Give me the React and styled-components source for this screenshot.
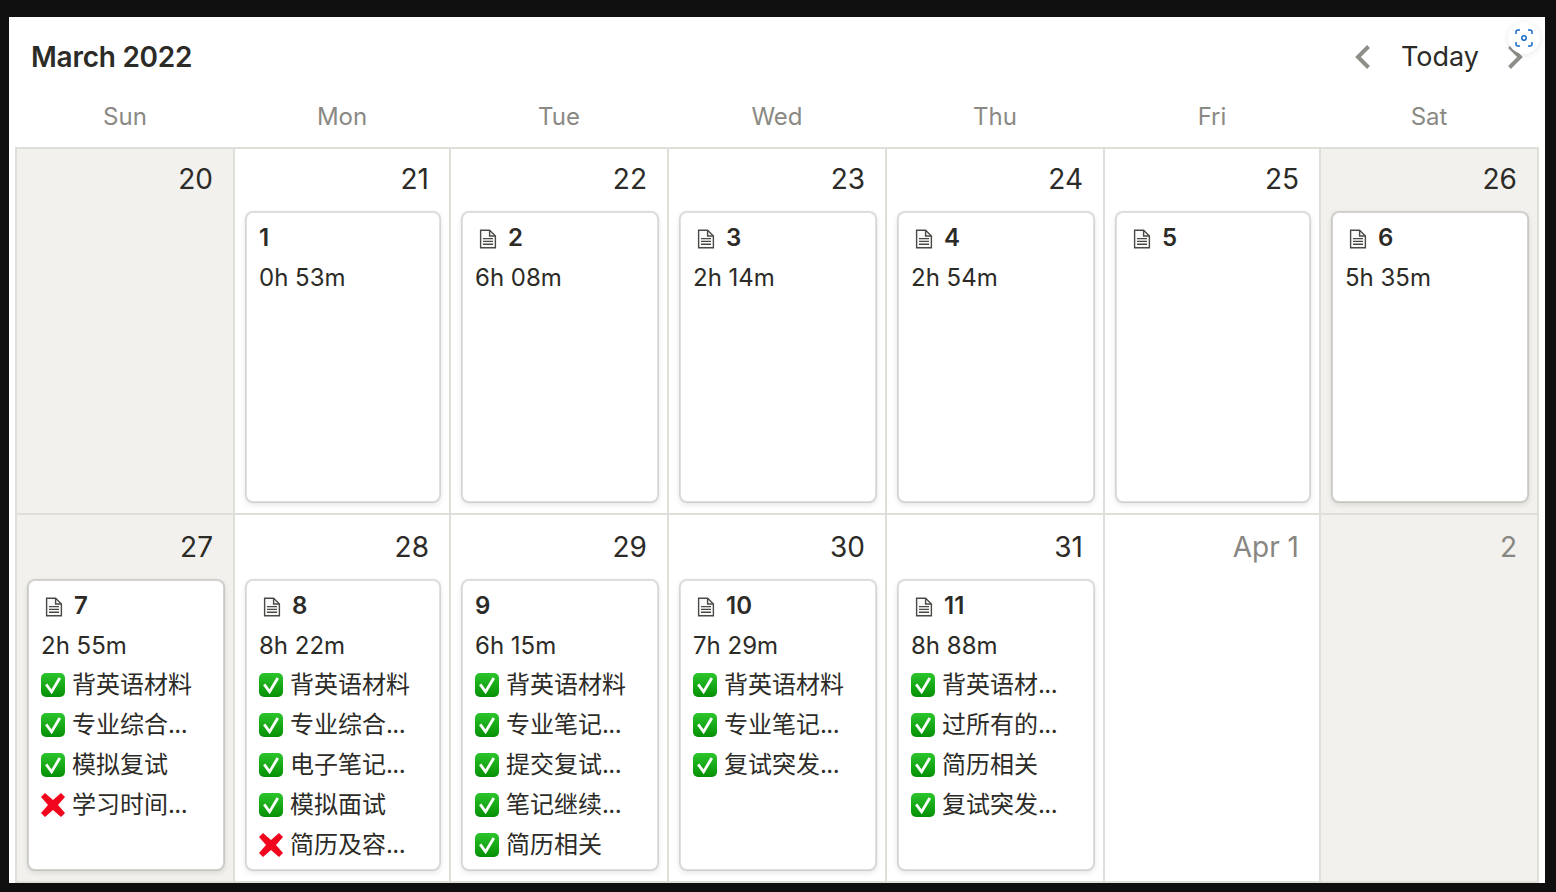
import React, { useId } from 'react';
import styled, { createGlobalStyle } from 'styled-components';

const FONT = `Inter, "Noto Sans CJK SC", "Noto Sans", sans-serif`;
const COLUMNS = '218px 216px 218px 218px 218px 216px 218px';

const GlobalStyle = createGlobalStyle`
  html, body {
    margin: 0;
    height: 100%;
    background: #0f0f0f;
  }
  * { box-sizing: border-box; }
  body {
    font-family: ${FONT};
    color: #2c2b27;
  }
`;

const DAYS = ['Sun', 'Mon', 'Tue', 'Wed', 'Thu', 'Fri', 'Sat'];

const WEEKS = [
  [
    { date: '20', weekend: true },
    { date: '21', card: { name: '1', noIcon: true, time: '0h 53m' } },
    { date: '22', card: { name: '2', time: '6h 08m' } },
    { date: '23', card: { name: '3', time: '2h 14m' } },
    { date: '24', card: { name: '4', time: '2h 54m' } },
    { date: '25', card: { name: '5' } },
    { date: '26', weekend: true, card: { name: '6', time: '5h 35m' } },
  ],
  [
    {
      date: '27',
      weekend: true,
      card: {
        name: '7',
        time: '2h 55m',
        items: [['y', '背英语材料'], ['y', '专业综合...'], ['y', '模拟复试'], ['n', '学习时间...']],
      },
    },
    {
      date: '28',
      card: {
        name: '8',
        time: '8h 22m',
        items: [['y', '背英语材料'], ['y', '专业综合...'], ['y', '电子笔记...'], ['y', '模拟面试'], ['n', '简历及容...']],
      },
    },
    {
      date: '29',
      card: {
        name: '9',
        noIcon: true,
        time: '6h 15m',
        items: [['y', '背英语材料'], ['y', '专业笔记...'], ['y', '提交复试...'], ['y', '笔记继续...'], ['y', '简历相关']],
      },
    },
    {
      date: '30',
      card: {
        name: '10',
        time: '7h 29m',
        items: [['y', '背英语材料'], ['y', '专业笔记...'], ['y', '复试突发...']],
      },
    },
    {
      date: '31',
      card: {
        name: '11',
        time: '8h 88m',
        items: [['y', '背英语材...'], ['y', '过所有的...'], ['y', '简历相关'], ['y', '复试突发...']],
      },
    },
    { date: 'Apr 1', muted: true },
    { date: '2', weekend: true, muted: true },
  ],
];

const DocIcon = () => (
  <svg width="18" height="20" viewBox="0 0 18 20" fill="none" stroke="#4a4945" strokeWidth="1.4">
    <path d="M1.6 1.2h9l5.8 5.8v11.8H1.6z" fill="#fafafa" />
    <path d="M10.6 1.2V7h5.8" />
    <path d="M4 9.6h10M4 12.4h10M4 15.2h10" />
  </svg>
);

const CheckIcon = () => {
  const id = useId();
  return (
    <svg width="24" height="24" viewBox="0 0 24 24">
      <defs>
        <linearGradient id={id} x1="0" y1="0" x2="0" y2="1">
          <stop offset="0" stopColor="#2cc52c" />
          <stop offset="1" stopColor="#059005" />
        </linearGradient>
      </defs>
      <rect x="0" y="0" width="24" height="24" rx="5" fill={`url(#${id})`} />
      <path d="M5.2 11.4l5.4 7.4L18.8 5" fill="none" stroke="#fff" strokeWidth="2.8" />
    </svg>
  );
};

const CrossIcon = () => (
  <svg width="24" height="24" viewBox="0 0 24 24">
    <path d="M4 0L12 7 20 0 24 4 17 12 24 20 20 24 12 17 4 24 0 20 7 12 0 4z" fill="#f0051c" />
  </svg>
);

const Chevron = ({ flip }) => (
  <svg width="16" height="24" viewBox="0 0 16 24" fill="none" stroke="#8f8e89" strokeWidth="4">
    <path d={flip ? 'M2.5 1.5L13 12 2.5 22.5' : 'M13.5 1.5L3 12 13.5 22.5'} />
  </svg>
);

const ScanIcon = () => (
  <svg width="18" height="18" viewBox="0 0 18 18" fill="none" stroke="#1a6bc9" strokeWidth="1.5">
    <path d="M1 5V3a2 2 0 0 1 2-2h2M13 1h2a2 2 0 0 1 2 2v2M17 13v2a2 2 0 0 1-2 2h-2M5 17H3a2 2 0 0 1-2-2v-2" />
    <circle cx="9" cy="9" r="2.2" />
  </svg>
);

// ellipsis dots sit tighter in the reference than in Inter
const Label = ({ text }) =>
  text.endsWith('...') ? (
    <>
      {text.slice(0, -3)}
      <Dots>...</Dots>
    </>
  ) : (
    text
  );

const EventCard = ({ card }) => (
  <Card>
    <CardTitle>
      {!card.noIcon && (
        <TitleIcon>
          <DocIcon />
        </TitleIcon>
      )}
      {card.name}
    </CardTitle>
    {card.time && <TimeLine>{card.time}</TimeLine>}
    {card.items &&
      card.items.map(([state, label], i) => (
        <ItemLine key={i}>
          <Mark>{state === 'y' ? <CheckIcon /> : <CrossIcon />}</Mark>
          <ItemText>
            <Label text={label} />
          </ItemText>
        </ItemLine>
      ))}
  </Card>
);

const App = () => (
  <>
    <GlobalStyle />
    <Panel>
      <Header>
        <Title>March 2022</Title>
        <Controls>
          <Chevron />
          <Today>Today</Today>
          <Chevron flip />
        </Controls>
        <ScanBadge>
          <ScanIcon />
        </ScanBadge>
      </Header>
      <DayRow>
        {DAYS.map((d) => (
          <DayName key={d}>{d}</DayName>
        ))}
      </DayRow>
      <Month>
        {WEEKS.map((week, w) =>
          week.map((cell) => (
            <Cell key={cell.date} $weekend={cell.weekend} $second={w === 1}>
              <DateLabel $muted={cell.muted}>{cell.date}</DateLabel>
              {cell.card && <EventCard card={cell.card} />}
            </Cell>
          ))
        )}
      </Month>
    </Panel>
  </>
);

const Panel = styled.div`
  width: 1536px;
  margin: 0 0 0 9px;
  position: relative;
  top: 17px;
  height: 866px;
  padding: 0 6px;
  background: #fff;
`;

const Header = styled.header`
  position: relative;
  display: flex;
  align-items: center;
  justify-content: space-between;
  height: 80px;
  padding: 0 16px;
`;

const Title = styled.h1`
  margin: 0;
  font-size: 28px;
  line-height: 40px;
  font-weight: 600;
  letter-spacing: -0.25px;
`;

const Controls = styled.div`
  display: flex;
  align-items: center;
  gap: 28px;
`;

const Today = styled.span`
  margin-left: 2px;
  font-size: 27px;
  line-height: 40px;
`;

const ScanBadge = styled.div`
  position: absolute;
  top: 5px;
  right: -1px;
  display: flex;
  align-items: center;
  justify-content: center;
  width: 32px;
  height: 32px;
  border-radius: 50%;
  background: #fff;
  box-shadow: 0 1px 6px rgba(0, 0, 0, 0.1);
`;

const DayRow = styled.div`
  display: grid;
  grid-template-columns: ${COLUMNS};
  height: 50px;
  padding-left: 1px;
`;

const DayName = styled.div`
  text-align: center;
  font-size: 24px;
  line-height: 40px;
  color: #8a8983;
`;

const Month = styled.div`
  display: grid;
  grid-template-columns: ${COLUMNS};
  grid-template-rows: 366px 368px;
  border-top: 2px solid #dfdfda;
  border-left: 2px solid #dfdfda;
`;

const Cell = styled.div`
  display: flex;
  flex-direction: column;
  padding-top: ${(p) => (p.$second ? '2px' : '0')};
  background: ${(p) => (p.$weekend ? '#f2f1ed' : '#fff')};
  border-right: 2px solid #dfdfda;
  border-bottom: 2px solid #dfdfda;
`;

const DateLabel = styled.div`
  height: 62px;
  padding: 10px 20px 0 0;
  text-align: right;
  font-size: 28px;
  line-height: 40px;
  color: ${(p) => (p.$muted ? '#878681' : 'inherit')};
`;

const Card = styled.div`
  height: 292px;
  margin: 0 8px 0 10px;
  padding: 4px 12px;
  border: 2px solid rgba(15, 15, 15, 0.13);
  border-radius: 8px;
  background: #fff;
  background-clip: padding-box;
  box-shadow: 0 2px 5px rgba(15, 15, 15, 0.1);
  overflow: hidden;
`;

const CardTitle = styled.div`
  display: flex;
  align-items: center;
  height: 40px;
  font-size: 24px;
  font-weight: 600;
`;

const TitleIcon = styled.span`
  display: flex;
  width: 33px;
  padding-left: 4px;
  padding-top: 3px;
`;

const TimeLine = styled.div`
  height: 40px;
  font-size: 24px;
  line-height: 42px;
  white-space: nowrap;
`;

const ItemLine = styled.div`
  display: flex;
  align-items: center;
  height: 40px;
  padding-bottom: 1px;
  font-size: 24px;
  white-space: nowrap;
`;

const Mark = styled.span`
  display: flex;
  flex: none;
  margin-right: 7px;
`;

const ItemText = styled.span`
  line-height: 32px;
  height: 32px;
`;

const Dots = styled.span`
  letter-spacing: -0.6px;
`;

export default App;
